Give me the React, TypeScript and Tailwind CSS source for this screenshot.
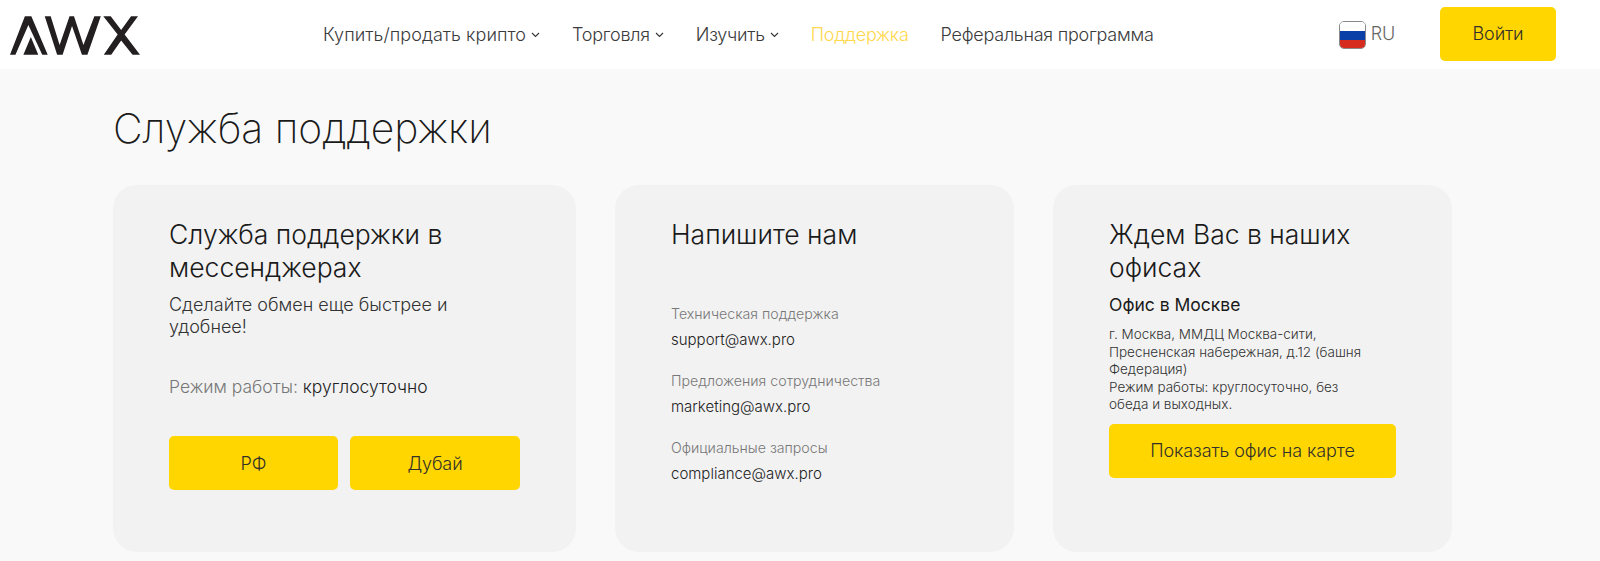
const font = "font-['Inter','Noto_Sans',sans-serif]";

function Chevron() {
  return (
    <svg width="9" height="6" viewBox="0 0 9 6" fill="none" className="ml-[5px] mt-[1px]">
      <path d="M1 1l3.500 3.500L8 1" stroke="#333" strokeWidth="1.100" />
    </svg>
  );
}

function Logo() {
  return (
    <svg width="130" height="39" viewBox="0 0 131 39" fill="#231f20" className="mt-[2px] shrink-0">
      <path d="M0 39L15 0h6.500l16.500 39h-5.500L18.500 9 5.500 39z" />
      <path d="M21 21l7.500 18H13.500z" />
      <path d="M35 0h6L50 29 60 0h4.500L74 29 85 0h6.500L78 39h-5.500l-10-29L53 39h-5.500z" />
      <path d="M94 0h7.500L112 14 122 0h7L115.500 18.500 131 39h-7.500L112 24.500 102 39h-7.500L108.500 18.500z" />
    </svg>
  );
}

function Flag() {
  return (
    <div className="flex h-[28px] w-[27px] flex-col overflow-hidden rounded-[5px] border border-[#8a8a8a]">
      <div className="h-[9px] bg-white" />
      <div className="h-[9px] bg-[#0b3fa8]" />
      <div className="flex-1 bg-[#d62b1f]" />
    </div>
  );
}

function Btn({ label, className }: { label: string; className: string }) {
  return (
    <button className={"flex h-[54px] items-center justify-center rounded-[5px] bg-[#ffd600] text-[18px] tracking-[-0.1px] text-[#33302a] " + className}>
      {label}
    </button>
  );
}

const contacts = [
  ["Техническая поддержка", "support@awx.pro"],
  ["Предложения сотрудничества", "marketing@awx.pro"],
  ["Официальные запросы", "compliance@awx.pro"],
];

export default function App() {
  return (
    <div className={"h-[561px] overflow-hidden bg-[#f9f9f9] font-light " + font}>
      <header className="flex h-[69px] items-center bg-white pl-[10px] pr-[44px]">
        <Logo />
        <nav className="ml-[183px] flex items-center gap-[32px] text-[18px] tracking-[-0.25px] text-[#3b3b3b]">
          <span className="flex items-center tracking-[0.05px]">Купить/продать крипто<Chevron /></span>
          <span className="flex items-center">Торговля<Chevron /></span>
          <span className="flex items-center">Изучить<Chevron /></span>
          <span className="text-[#ffd84d]">Поддержка</span>
          <span>Реферальная программа</span>
        </nav>
        <div className="ml-auto flex items-center gap-[5px] text-[18px] tracking-[-0.2px] text-[#666]">
          <Flag />
          <span className="-mt-[3px]">RU</span>
        </div>
        <Btn label="Войти" className="mb-[2px] ml-[45px] w-[116px]" />
      </header>

      <main className="px-[113px] pt-[34px]">
        <h1 className="text-[40.800px] leading-[50px] font-extralight text-[#1a1a1a]">Служба поддержки</h1>
        <div className="mt-[32px] flex h-[367px] gap-[39px]">
          <section className="w-[463px] rounded-[24px] bg-[#f2f2f2] pl-[56px] pr-[50px] pt-[33px]">
            <h2 className="text-[26.500px] leading-[32.500px] text-[#1a1a1a]">Служба поддержки в мессенджерах</h2>
            <p className="mt-[11px] w-[310px] text-[18px] leading-[22px] text-[#333]">Сделайте обмен еще быстрее и удобнее!</p>
            <p className="mt-[37px] text-[17.500px] leading-[24px] text-[#777]">
              Режим работы: <span className="text-[#222]">круглосуточно</span>
            </p>
            <div className="mt-[37px] flex gap-[12px]">
              <Btn label="РФ" className="w-[169px]" />
              <Btn label="Дубай" className="w-[170px]" />
            </div>
          </section>

          <section className="w-[399px] rounded-[24px] bg-[#f2f2f2] pl-[56px] pt-[33px]">
            <h2 className="text-[26.500px] leading-[32.500px] text-[#1a1a1a]">Напишите нам</h2>
            <div className="mt-[53px] flex flex-col gap-[20px]">
              {contacts.map(([k, v]) => (
                <div key={k}>
                  <div className="text-[14.200px] leading-[20px] text-[#777]">{k}</div>
                  <div className="mt-[5px] text-[15px] leading-[22px] text-[#222]">{v}</div>
                </div>
              ))}
            </div>
          </section>

          <section className="w-[399px] rounded-[24px] bg-[#f2f2f2] pl-[56px] pr-[56px] pt-[33px]">
            <h2 className="text-[26.500px] leading-[32.500px] text-[#1a1a1a]">Ждем Вас в наших офисах</h2>
            <h3 className="mt-[11px] text-[17.500px] leading-[22px] font-normal text-[#1a1a1a]">Офис в Москве</h3>
            <p className="mt-[10px] w-[270px] text-[13.500px] leading-[17.500px] text-[#333]">
              г. Москва, ММДЦ Москва-сити, Пресненская набережная, д.12 (башня Федерация)
              <br />
              Режим работы: круглосуточно, без обеда и выходных.
            </p>
            <Btn label="Показать офис на карте" className="mt-[10px] w-[287px]" />
          </section>
        </div>
      </main>
    </div>
  );
}
